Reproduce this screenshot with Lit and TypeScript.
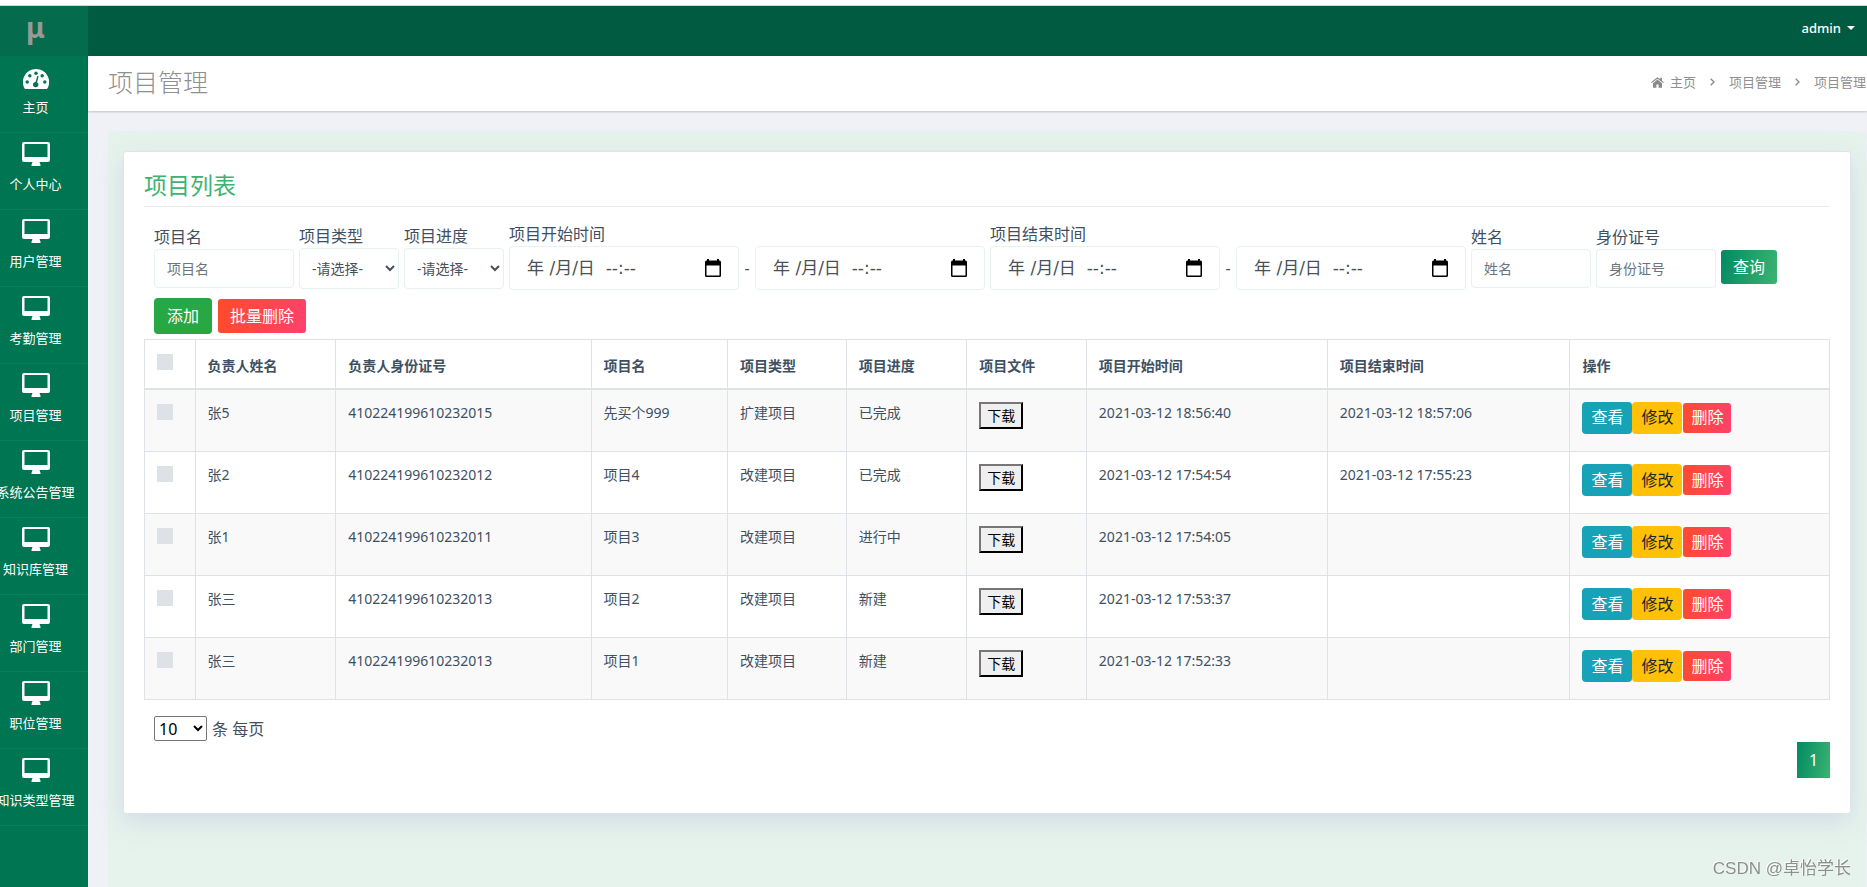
import { LitElement, html, svg, css } from "lit";
import { customElement, state } from "lit/decorators.js";

interface Project {
  owner: string;
  idNo: string;
  name: string;
  type: string;
  progress: string;
  start: string;
  end: string;
}

const MENU = [
  "主页", "个人中心", "用户管理", "考勤管理", "项目管理",
  "系统公告管理", "知识库管理", "部门管理", "职位管理", "知识类型管理",
];

const PROJECTS: Project[] = [
  { owner: "张5", idNo: "410224199610232015", name: "先买个999", type: "扩建项目", progress: "已完成", start: "2021-03-12 18:56:40", end: "2021-03-12 18:57:06" },
  { owner: "张2", idNo: "410224199610232012", name: "项目4", type: "改建项目", progress: "已完成", start: "2021-03-12 17:54:54", end: "2021-03-12 17:55:23" },
  { owner: "张1", idNo: "410224199610232011", name: "项目3", type: "改建项目", progress: "进行中", start: "2021-03-12 17:54:05", end: "" },
  { owner: "张三", idNo: "410224199610232013", name: "项目2", type: "改建项目", progress: "新建", start: "2021-03-12 17:53:37", end: "" },
  { owner: "张三", idNo: "410224199610232013", name: "项目1", type: "改建项目", progress: "新建", start: "2021-03-12 17:52:33", end: "" },
];

const COLUMNS = ["负责人姓名", "负责人身份证号", "项目名", "项目类型", "项目进度", "项目文件", "项目开始时间", "项目结束时间", "操作"];

const gaugeIcon = html`<svg width="26" height="20" viewBox="0 0 26 20" aria-hidden="true">
  ${svg`<path fill="#fff" fill-rule="evenodd" d="M13 0A13 13 0 0 0 2 20H24A13 13 0 0 0 13 0Z"/>
  <g fill="#007552"><circle cx="4.2" cy="13" r="1.7"/><circle cx="6.8" cy="6.8" r="1.7"/><circle cx="13" cy="4.2" r="1.7"/><circle cx="19.2" cy="6.8" r="1.7"/><circle cx="21.8" cy="13" r="1.7"/><circle cx="12.7" cy="15.6" r="2.7"/></g>
  <path d="M12.8 15L14.8 7.6" stroke="#007552" stroke-width="1.5" stroke-linecap="round"/>`}
</svg>`;

const desktopIcon = html`<svg width="28" height="24" viewBox="0 0 28 24" aria-hidden="true">
  <path fill="#fff" fill-rule="evenodd" d="M2 0H26A2 2 0 0 1 28 2V18A2 2 0 0 1 26 20H17.5L18.5 23V24H9.500V23L10.500 20H2A2 2 0 0 1 0 18V2A2 2 0 0 1 2 0ZM2.500 2V15H25.500V2Z"/>
</svg>`;

const homeIcon = html`<svg width="13" height="11" viewBox="0 0 13 11" aria-hidden="true">
  <path fill="#8a8a8a" d="M6.500 2.600L2 6.300V10.300Q2 10.800 2.500 10.800H5.400V7.600H7.600V10.800H10.500Q11 10.800 11 10.300V6.300ZM6 .4Q6.500 0 7 .4L9.200 2.200V.7H11V3.700L12.900 5.300L12.200 6.100L6.500 1.700L.8 6.100L.1 5.300Z"/>
</svg>`;

const chevronIcon = html`<svg width="5" height="8" viewBox="0 0 5 8" aria-hidden="true">
  <path d="M.7 .7L4 4L.7 7.300" fill="none" stroke="#888" stroke-width="1.3"/>
</svg>`;

const calendarIcon = html`<svg width="16" height="18" viewBox="0 0 16 18" aria-hidden="true">
  <path fill="#000" fill-rule="evenodd" d="M2 0H4V1.500H12V0H14V1.500H14.500Q16 1.500 16 3V16.500Q16 18 14.500 18H1.500Q0 18 0 16.500V3Q0 1.500 1.500 1.500H2ZM1.500 6.500V16.500H14.500V6.500Z"/>
</svg>`;

@customElement("app-root")
export class AppRoot extends LitElement {
  @state() private selected = new Set<number>();

  static styles = css`
    :host {
      display: flex;
      flex-direction: column;
      min-height: 100vh;
      box-sizing: border-box;
      border-top: 5px solid #fff;
      background: #f0f1f6;
      color: #3e5062;
      font: 16px/24px "Noto Sans", "Noto Sans CJK SC", sans-serif;
    }
    * { box-sizing: border-box; }
    h1, h2, ul, ol { margin: 0; padding: 0; font-weight: 400; }
    ul, ol { list-style: none; }
    a { color: inherit; text-decoration: none; }
    button, input, select { font: inherit; margin: 0; }

    .top {
      display: flex;
      height: 51px;
      border-top: 1px solid #c4ded4;
      background: #005b40;
      color: #fff;
    }
    .logo {
      width: 88px;
      padding-right: 17px;
      background: #046c4d;
      color: #999;
      font-size: 28px;
      line-height: 42px;
      font-weight: 700;
      text-align: center;
    }
    .user {
      display: flex;
      align-items: center;
      gap: 6px;
      height: 44px;
      margin-left: auto;
      padding: 0 12px;
      border: 0;
      background: none;
      color: #fff;
      font-size: 13px;
      font-weight: 500;
    }
    .caret {
      border: 4px solid transparent;
      border-top-color: #fff;
      border-bottom: 0;
    }
    .body { display: flex; flex: 1; }
    .side {
      flex: none;
      width: 88px;
      overflow: hidden;
      background: #007552;
      color: #fff;
    }
    .item {
      display: flex;
      flex-direction: column;
      align-items: center;
      gap: 8px;
      padding: 9px 17px 15px 0;
      border-bottom: 1px solid #07805b;
      font-size: 13px;
      line-height: 20px;
      white-space: nowrap;
    }
    .slot { display: flex; align-items: flex-end; height: 24px; }
    .main { display: flex; flex-direction: column; flex: 1; min-width: 0; }
    .titlebar {
      display: flex;
      align-items: center;
      justify-content: space-between;
      height: 55px;
      padding: 0 1px 3px 20px;
      background: #fff;
      box-shadow: 0 1px 2px rgba(0, 0, 0, 0.2);
      color: #8f8f8f;
    }
    .title { font-size: 25px; line-height: 36px; font-weight: 300; }
    .crumbs { display: flex; font-size: 13px; line-height: 20px; }
    .crumb { display: flex; align-items: center; gap: 6px; }
    .crumb + .crumb { gap: 14px; padding-left: 14px; }
    .content {
      flex: 1;
      margin: 20px 1px 0 20px;
      padding: 20px 15px;
      background: #e6f3ec;
    }
    .card {
      padding: 19px 20px 35px;
      border: 1px solid #dee4ec;
      border-radius: 3px;
      background: #fff;
      box-shadow: 0 8px 24px rgba(190, 200, 225, 0.5);
    }
    .heading {
      padding-bottom: 7px;
      border-bottom: 1px solid #ececec;
      color: #3cb371;
      font-size: 23px;
      line-height: 28px;
    }
    .filters {
      display: flex;
      flex-wrap: wrap;
      align-items: center;
      gap: 5px;
      padding: 15px 10px 0;
    }
    .field { display: flex; flex-direction: column; }
    .range { display: flex; align-items: center; }
    .dash { width: 16px; text-align: center; }
    .text, .pick, .date {
      border: 1px solid #e6f3ec;
      border-radius: 4px;
      background: #fff;
      color: #495057;
    }
    .text { width: 140px; height: 39px; padding: 0 12px; font-size: 14px; }
    .text.short { width: 120px; }
    .text::placeholder { color: #6c757d; opacity: 1; }
    .pick { width: 100px; height: 41px; padding: 0 0 0 8px; font-size: 14px; }
    .date {
      display: flex;
      align-items: center;
      width: 230px;
      height: 44px;
      padding: 0 17px 0 17px;
    }
    .stamp {
      flex: 1;
      min-width: 0;
      padding: 0;
      border: 0;
      outline: 0;
      background: none;
      color: #495057;
      font-family: "DejaVu Sans", "Noto Sans CJK SC", sans-serif;
      font-size: 17px;
    }
    .stamp::placeholder { color: #495057; opacity: 1; }
    .open { display: flex; padding: 0; border: 0; background: none; }
    .btn {
      height: 34px;
      padding: 0 12px;
      border: 0;
      border-radius: 3px;
      background: linear-gradient(100deg, #028a63, #3cb371);
      color: #fff;
      line-height: 24px;
    }
    .search { align-self: flex-end; margin-bottom: 6px; }
    .actions { display: flex; align-items: center; gap: 6px; padding: 8px 10px 5px; }
    .add { height: 36px; padding: 0 13px; border-radius: 4px; background: #28a745; }
    .danger { background: linear-gradient(100deg, #ff4b2b, #ff416c); }

    .list {
      width: 100%;
      border-collapse: collapse;
      table-layout: fixed;
      font-size: 14px;
      line-height: 21px;
    }
    .list th, .list td {
      padding: 12px;
      border: 1px solid #dee2e6;
      text-align: left;
      vertical-align: top;
      overflow-wrap: anywhere;
    }
    .list th { height: 49px; padding: 15px 12px 10px; border-bottom-width: 2px; font-weight: 700; }
    .list td { height: 62px; }
    .list tbody tr:first-child td { height: 63px; }
    .list tbody tr:nth-child(odd) { background: #f9f9f9; }
    .list .tick { padding-top: 14px; }
    .c0 { width: 3%; }
    .c1 { width: 8.35%; }
    .c2 { width: 15.15%; }
    .c3 { width: 8.1%; }
    .c4 { width: 7.05%; }
    .c5 { width: 7.15%; }
    .c6 { width: 7.1%; }
    .c7 { width: 14.3%; }
    .c8 { width: 14.4%; }
    .c9 { width: 15.4%; }
    .box {
      display: block;
      appearance: none;
      width: 16px;
      height: 16px;
      background: #dee2e6;
    }
    .box:checked { background: #3cb371; }
    .file {
      display: block;
      height: 27px;
      padding: 1px 6px;
      border: 2px outset #767676;
      border-color: #767676 #212121 #212121 #767676;
      background: #efefef;
      color: #000;
      line-height: 21px;
    }
    .ops { display: flex; align-items: center; }
    .op {
      height: 32px;
      padding: 0 9px;
      border: 0;
      border-radius: 4px;
      font-size: 16px;
      white-space: nowrap;
    }
    .view { background: #17a2b8; color: #fff; }
    .edit { background: #ffc107; color: #212529; }
    .del { height: 30px; margin-left: 1px; padding: 0 8px; border-radius: 3px; color: #fff; }

    .size { display: flex; align-items: center; gap: 5px; padding: 16px 10px 0; }
    .count { width: 53px; height: 25px; border: 1px solid #767676; border-radius: 2px; background: #fff; color: #000; }
    .pages { display: flex; justify-content: flex-end; padding-top: 1px; }
    .page { width: 33px; height: 36px; padding: 0; border-radius: 0; }
    .mark {
      position: fixed;
      right: 16px;
      bottom: 6px;
      color: #8b908d;
      font-size: 17px;
      font-family: "Liberation Sans", "Noto Sans CJK SC", sans-serif;
      text-shadow: -1px -1px 0 #fff;
    }
  `;

  private toggle(i: number) {
    const next = new Set(this.selected);
    next.has(i) ? next.delete(i) : next.add(i);
    this.selected = next;
  }

  private toggleAll() {
    this.selected = this.selected.size === PROJECTS.length ? new Set() : new Set(PROJECTS.map((_, i) => i));
  }

  private renderDate(id: string, label: string) {
    return html`<span class="date">
      <input class="stamp" id=${id} type="text" aria-label=${label} placeholder="年 /月/日&nbsp; --:--" />
      <button class="open" type="button" aria-label="选择日期">${calendarIcon}</button>
    </span>`;
  }

  private renderRange(id: string, label: string) {
    return html`<div class="field">
      <label for="${id}-from">${label}</label>
      <div class="range">
        ${this.renderDate(`${id}-from`, label)}<span class="dash">-</span>${this.renderDate(`${id}-to`, label)}
      </div>
    </div>`;
  }

  private renderText(id: string, label: string, cls: string) {
    return html`<div class="field">
      <label for=${id}>${label}</label>
      <input class=${cls} id=${id} type="text" placeholder=${label} />
    </div>`;
  }

  private renderSelect(id: string, label: string) {
    return html`<div class="field">
      <label for=${id}>${label}</label>
      <select class="pick" id=${id}><option>-请选择-</option></select>
    </div>`;
  }

  render() {
    return html`
      <header class="top">
        <a class="logo" href="#">μ</a>
        <button class="user" type="button">admin <span class="caret"></span></button>
      </header>
      <div class="body">
        <nav class="side">
          <ul>
            ${MENU.map((label, i) => html`<li>
              <a class="item" href="#"><span class="slot">${i === 0 ? gaugeIcon : desktopIcon}</span><span>${label}</span></a>
            </li>`)}
          </ul>
        </nav>
        <main class="main">
          <div class="titlebar">
            <h1 class="title">项目管理</h1>
            <ol class="crumbs">
              <li class="crumb">${homeIcon}<a href="#">主页</a></li>
              <li class="crumb">${chevronIcon}<a href="#">项目管理</a></li>
              <li class="crumb">${chevronIcon}<span>项目管理</span></li>
            </ol>
          </div>
          <div class="content">
            <section class="card">
              <h2 class="heading">项目列表</h2>
              <form class="filters" @submit=${(e: Event) => e.preventDefault()}>
                ${this.renderText("name", "项目名", "text")}
                ${this.renderSelect("type", "项目类型")}
                ${this.renderSelect("progress", "项目进度")}
                ${this.renderRange("start", "项目开始时间")}
                ${this.renderRange("end", "项目结束时间")}
                ${this.renderText("person", "姓名", "text short")}
                ${this.renderText("idno", "身份证号", "text short")}
                <button class="btn search" type="submit">查询</button>
              </form>
              <div class="actions">
                <button class="btn add" type="button">添加</button>
                <button class="btn danger" type="button">批量删除</button>
              </div>
              <table class="list">
                <colgroup>
                  <col class="c0" /><col class="c1" /><col class="c2" /><col class="c3" /><col class="c4" />
                  <col class="c5" /><col class="c6" /><col class="c7" /><col class="c8" /><col class="c9" />
                </colgroup>
                <thead>
                  <tr>
                    <th class="tick"><input class="box" type="checkbox" aria-label="全选"
                      .checked=${this.selected.size === PROJECTS.length} @change=${this.toggleAll} /></th>
                    ${COLUMNS.map((c) => html`<th scope="col">${c}</th>`)}
                  </tr>
                </thead>
                <tbody>
                  ${PROJECTS.map((p, i) => html`<tr>
                    <td class="tick"><input class="box" type="checkbox" aria-label="选择"
                      .checked=${this.selected.has(i)} @change=${() => this.toggle(i)} /></td>
                    <td>${p.owner}</td>
                    <td>${p.idNo}</td>
                    <td>${p.name}</td>
                    <td>${p.type}</td>
                    <td>${p.progress}</td>
                    <td><button class="file" type="button">下载</button></td>
                    <td>${p.start}</td>
                    <td>${p.end}</td>
                    <td>
                      <div class="ops">
                        <button class="op view" type="button">查看</button>
                        <button class="op edit" type="button">修改</button>
                        <button class="op del danger" type="button">删除</button>
                      </div>
                    </td>
                  </tr>`)}
                </tbody>
              </table>
              <div class="size">
                <select class="count" id="count"><option>10</option></select>
                <label for="count">条 每页</label>
              </div>
              <div class="pages"><button class="btn page" type="button">1</button></div>
            </section>
          </div>
        </main>
      </div>
      <div class="mark">CSDN @卓怡学长</div>
    `;
  }
}
